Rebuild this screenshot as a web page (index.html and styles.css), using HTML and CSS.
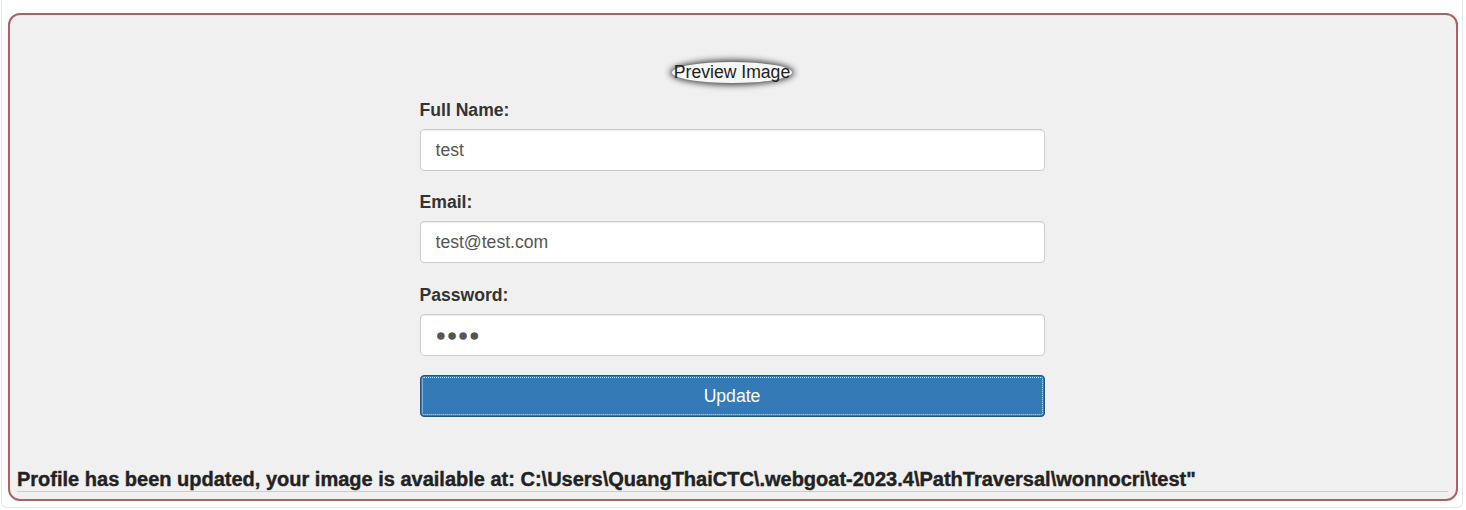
FILE: index.html
```html
<!DOCTYPE html>
<html>
<head>
<meta charset="utf-8">
<link rel="stylesheet" href="styles.css">
</head>
<body>
<div class="outer">
  <div class="box">
    <div class="preview-row"><span class="preview">Preview Image</span></div>
    <form class="form">
      <div class="group">
        <label class="label">Full Name:</label>
        <input class="field" type="text" value="test" readonly>
      </div>
      <div class="group">
        <label class="label">Email:</label>
        <input class="field" type="text" value="test@test.com" readonly>
      </div>
      <div class="group group-last">
        <label class="label">Password:</label>
        <input class="field field-pass" type="text" value="●●●●" readonly>
      </div>
      <button class="btn" type="button">Update</button>
    </form>
    <div class="message">Profile has been updated, your image is available at: C:\Users\QuangThaiCTC\.webgoat-2023.4\PathTraversal\wonnocri\test"</div>
    <div class="rule"></div>
  </div>
</div>
</body>
</html>
```

FILE: styles.css
```css
html, body {
  margin: 0;
  padding: 0;
  background: #ffffff;
}
body {
  font-family: "Liberation Sans", Arial, sans-serif;
  color: #333333;
}
.outer {
  margin: -20px 3px 0 1px;
  border: 1px solid #e6e6ef;
  border-top: none;
  border-radius: 0 0 6px 6px;
  background: #ffffff;
  padding: 33px 4px 6px 6px;
}
.box {
  border: 2px solid #a86464;
  border-radius: 12px;
  background: #f0f0f0;
  padding: 47px 9px 7px 7px;
}
.preview-row {
  display: flex;
  justify-content: center;
  height: 21px;
}
.preview {
  display: inline-block;
  height: 21px;
  line-height: 21px;
  padding: 0 2px;
  font-size: 17.6px;
  color: #222;
  background: #f7f7f7;
  border-radius: 50%;
  box-shadow: 0 0 6px 2px rgba(0, 0, 0, 0.75);
}
.form {
  width: 625px;
  margin: 17px auto 0;
  display: flex;
  flex-direction: column;
}
.group {
  display: flex;
  flex-direction: column;
  margin-bottom: 21px;
}
.group-last {
  margin-top: 1px;
  margin-bottom: 19px;
}
.label {
  font-size: 17.6px;
  font-weight: bold;
  line-height: 20px;
  margin-bottom: 9px;
  color: #333;
}
.field {
  box-sizing: border-box;
  height: 42px;
  margin: 0;
  padding: 0 15px;
  font-family: "Liberation Sans", Arial, sans-serif;
  font-size: 17.6px;
  color: #555;
  background: #fff;
  border: 1px solid #cccccc;
  border-radius: 4px;
  box-shadow: inset 0 1px 1px rgba(0, 0, 0, 0.075);
  outline: none;
}
.field-pass {
  letter-spacing: 0.5px;
}
.btn {
  box-sizing: border-box;
  height: 42px;
  margin: 0;
  font-family: "Liberation Sans", Arial, sans-serif;
  font-size: 17.6px;
  color: #fff;
  background: #337ab7;
  border: 1px solid #245580;
  border-radius: 4px;
  outline: 1px dotted rgba(255, 255, 255, 0.8);
  outline-offset: -3px;
}
.message {
  margin-top: 51px;
  font-size: 20px;
  font-weight: bold;
  line-height: 23px;
  color: #222;
  -webkit-text-stroke: 0.4px #222;
}
.rule {
  height: 1px;
  background: #cccccc;
  margin-right: -1px;
}
```
